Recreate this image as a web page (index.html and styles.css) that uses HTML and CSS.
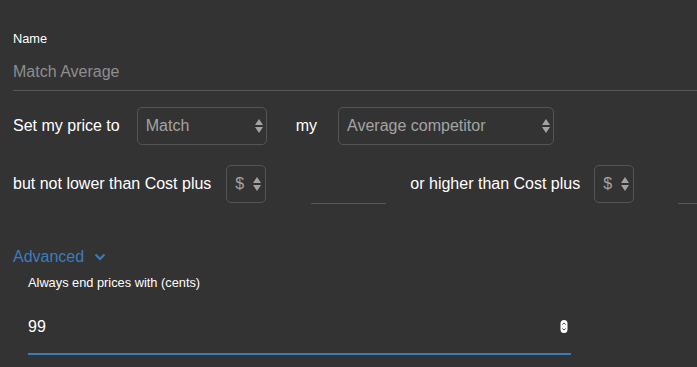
FILE: index.html
```html
<!DOCTYPE html>
<html lang="en">
<head>
<meta charset="utf-8">
<title>Pricing rule</title>
<link rel="stylesheet" href="styles.css">
</head>
<body>
<form class="rule-form">
  <label class="field-label">Name</label>
  <input class="name-input" type="text" placeholder="Match Average">

  <div class="rule-row row-one">
    <span class="row-text">Set my price to</span>
    <div class="select select-match">
      <span class="select-value">Match</span>
      <svg class="select-arrows" width="8" height="14" viewBox="0 0 8 14"><polygon points="0,6 4,0 8,6" /><polygon points="0,8 8,8 4,14" /></svg>
    </div>
    <span class="row-text text-my">my</span>
    <div class="select select-competitor">
      <span class="select-value">Average competitor</span>
      <svg class="select-arrows" width="8" height="14" viewBox="0 0 8 14"><polygon points="0,6 4,0 8,6" /><polygon points="0,8 8,8 4,14" /></svg>
    </div>
  </div>

  <div class="rule-row row-two">
    <span class="row-text">but not lower than Cost plus</span>
    <div class="select select-unit">
      <span class="select-value">$</span>
      <svg class="select-arrows" width="8" height="14" viewBox="0 0 8 14"><polygon points="0,6 4,0 8,6" /><polygon points="0,8 8,8 4,14" /></svg>
    </div>
    <input class="amount-input" type="text">
    <span class="row-text text-higher">or higher than Cost plus</span>
    <div class="select select-unit">
      <span class="select-value">$</span>
      <svg class="select-arrows" width="8" height="14" viewBox="0 0 8 14"><polygon points="0,6 4,0 8,6" /><polygon points="0,8 8,8 4,14" /></svg>
    </div>
    <input class="amount-input amount-last" type="text">
  </div>

  <div class="advanced-toggle">
    <span>Advanced</span>
    <svg class="chevron" width="12" height="8" viewBox="0 0 12 8"><path d="M1.5 1.5 L6 6 L10.5 1.5" /></svg>
  </div>

  <div class="advanced-panel">
    <label class="field-label">Always end prices with (cents)</label>
    <div class="cents-wrap">
      <input class="cents-input" type="text" value="99">
      <svg class="spinner" width="8" height="13" viewBox="0 0 8 13"><rect x="0.5" y="0" width="7" height="13" rx="3.5" fill="#fff"/><path d="M2.3 4.6 L4 2.9 L5.7 4.6 M2.3 8.4 L4 10.1 L5.7 8.4" fill="none" stroke="#444" stroke-width="1"/></svg>
    </div>
  </div>
</form>
</body>
</html>
```
FILE: styles.css
```css
html, body {
  margin: 0;
  padding: 0;
  background: #333333;
  overflow: hidden;
}

body {
  font-family: "Liberation Sans", Arial, sans-serif;
  color: #ffffff;
}

.rule-form {
  padding: 32px 0 0 13px;
}

.field-label {
  display: block;
  font-size: 12.8px;
  line-height: 14px;
  color: #ffffff;
}

.name-input {
  display: block;
  box-sizing: border-box;
  width: 100%;
  height: 45px;
  margin: 0;
  padding: 16px 0 8px;
  border: 0;
  border-bottom: 1px solid #575757;
  background: transparent;
  font-family: inherit;
  font-size: 16px;
  line-height: 18px;
  color: #ffffff;
  outline: none;
}

.name-input::placeholder {
  color: #8e8e8e;
}

.rule-row {
  display: flex;
  align-items: center;
  white-space: nowrap;
}

.rule-row > * {
  flex-shrink: 0;
}

.row-one {
  margin-top: 16px;
  height: 38px;
}

.row-two {
  margin-top: 19px;
  height: 40px;
}

.row-text {
  font-size: 16px;
  color: #ffffff;
}

.select {
  box-sizing: border-box;
  height: 38px;
  display: flex;
  align-items: center;
  justify-content: space-between;
  padding: 0 3px 0 8px;
  border: 1px solid #545454;
  border-radius: 5px;
  font-size: 16px;
  color: #a3a3a3;
}

.select-arrows {
  fill: #a3a3a3;
  display: block;
}

.select-match {
  width: 130px;
  margin-left: 17px;
}

.text-my {
  margin-left: 29px;
}

.select-competitor {
  width: 216px;
  margin-left: 21px;
}

.select-unit {
  width: 40px;
  margin-left: 15px;
  padding-right: 4px;
}

.text-higher {
  margin-left: 24px;
}

.text-higher + .select-unit {
  margin-left: 14px;
}

.amount-input {
  box-sizing: border-box;
  width: 75px;
  height: 40px;
  margin: 0 0 0 45px;
  padding: 0;
  border: 0;
  border-bottom: 1px solid #575757;
  background: transparent;
  font-family: inherit;
  font-size: 16px;
  color: #ffffff;
  outline: none;
}

.rule-row > .amount-last {
  flex: 1 1 75px;
  min-width: 0;
  margin-left: 44px;
}

.advanced-toggle {
  margin-top: 44px;
  display: flex;
  align-items: center;
  font-size: 16px;
  line-height: 18px;
  color: #3a7dbf;
}

.chevron {
  margin-left: 10px;
  fill: none;
  stroke: #3a7dbf;
  stroke-width: 2;
  display: block;
}

.advanced-panel {
  margin-top: 10px;
  padding-left: 15px;
}

.cents-wrap {
  position: relative;
  width: 543px;
}

.cents-input {
  display: block;
  box-sizing: border-box;
  width: 100%;
  height: 65px;
  margin: 0;
  padding: 28px 0 17px;
  border: 0;
  border-bottom: 2px solid #3a7bbd;
  background: transparent;
  font-family: inherit;
  font-size: 16px;
  line-height: 18px;
  color: #ffffff;
  outline: none;
}

.spinner {
  position: absolute;
  right: 3px;
  top: 30px;
  display: block;
}
```
